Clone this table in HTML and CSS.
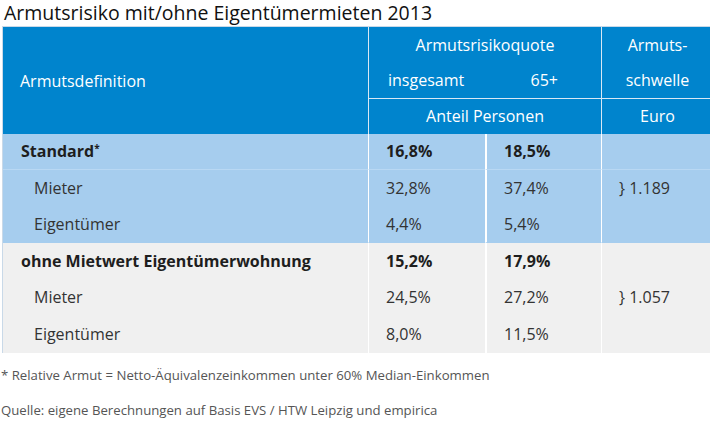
FILE: index.html
```html
<!DOCTYPE html>
<html lang="de">
<head>
<meta charset="utf-8">
<link rel="stylesheet" href="styles.css">
</head>
<body>
<h1 class="title">Armutsrisiko mit/ohne Eigentümermieten 2013</h1>
<table class="tbl">
  <colgroup>
    <col class="c1"><col class="c2"><col class="c3"><col class="c4">
  </colgroup>
  <thead>
    <tr>
      <th rowspan="2" class="def">Armutsdefinition</th>
      <th colspan="2" class="quote">
        <div class="qline">Armutsrisikoquote</div>
        <div class="qsub"><span>insgesamt</span><span>65+</span></div>
      </th>
      <th class="schw"><div class="qline">Armuts-</div><div class="qsub2">schwelle</div></th>
    </tr>
    <tr>
      <th colspan="2" class="unit">Anteil Personen</th>
      <th class="unit">Euro</th>
    </tr>
  </thead>
  <tbody class="blue">
    <tr class="head">
      <td class="lbl"><b>Standard<sup>*</sup></b></td>
      <td><b>16,8%</b></td><td class="mid"><b>18,5%</b></td><td></td>
    </tr>
    <tr>
      <td class="sub">Mieter</td>
      <td>32,8%</td><td class="mid">37,4%</td><td>} 1.189</td>
    </tr>
    <tr>
      <td class="sub">Eigentümer</td>
      <td>4,4%</td><td class="mid">5,4%</td><td></td>
    </tr>
  </tbody>
  <tbody class="gray">
    <tr class="head">
      <td class="lbl"><b>ohne Mietwert Eigentümerwohnung</b></td>
      <td><b>15,2%</b></td><td class="mid"><b>17,9%</b></td><td></td>
    </tr>
    <tr>
      <td class="sub">Mieter</td>
      <td>24,5%</td><td class="mid">27,2%</td><td>} 1.057</td>
    </tr>
    <tr>
      <td class="sub">Eigentümer</td>
      <td>8,0%</td><td class="mid">11,5%</td><td></td>
    </tr>
  </tbody>
</table>
<p class="note">* Relative Armut = Netto-Äquivalenzeinkommen unter 60% Median-Einkommen</p>
<p class="note">Quelle: eigene Berechnungen auf Basis EVS / HTW Leipzig und empirica</p>
</body>
</html>
```

FILE: styles.css
```css
html, body {
  margin: 0;
  padding: 0;
  background: #ffffff;
}
body {
  font-family: "Open Sans", "Liberation Sans", sans-serif;
  color: #333333;
  width: 710px;
  overflow: hidden;
}
.title {
  margin: 0;
  padding: 0 0 0 4px;
  font-size: 19.5px;
  font-weight: 400;
  line-height: 26px;
  height: 26px;
  color: #111111;
  white-space: nowrap;
}
.tbl {
  margin-left: 2px;
  width: 710px;
  border-collapse: separate;
  border-spacing: 0;
  table-layout: fixed;
  font-size: 16px;
  border-top: 1px solid #c9d9e8;
  border-left: 1px solid #c9d9e8;
}
.c1 { width: 365px; }
.c2 { width: 117px; }
.c3 { width: 116px; }
.c4 { width: 112px; }

thead th {
  background: #0084cd;
  color: #ffffff;
  font-weight: 400;
  padding: 0;
  border-left: 1px solid #d9e8f5;
  vertical-align: middle;
}
thead th.def {
  text-align: left;
  padding-left: 17px;
  border-left: none;
}
.qline {
  line-height: 36px;
  text-align: center;
}
.quote .qsub {
  display: flex;
  justify-content: space-between;
  line-height: 35px;
  padding: 0 43px 0 19px;
}
.qsub2 {
  line-height: 35px;
}
.quote, .schw {
  border-bottom: 1px solid #d9e8f5;
}
thead th.unit {
  height: 35px;
  line-height: 35px;
}

tbody td {
  padding: 0 0 0 17px;
  height: 36px;
  line-height: 36px;
  border-left: 1px solid #ffffff;
  white-space: nowrap;
}
tbody td.mid {
  border-left: 2px solid #ffffff;
}
tbody td.lbl {
  border-left: none;
  padding-left: 18px;
}
tbody td.sub {
  border-left: none;
  padding-left: 31px;
}
tbody b {
  color: #1e1e1e;
  font-weight: 700;
}
sup {
  font-size: 10px;
  line-height: 0;
  vertical-align: 5px;
}
.blue td {
  background: #a6cdee;
}
.blue tr.head td {
  height: 35px;
  line-height: 35px;
  border-bottom: 1px solid #b9d8f3;
}
.gray td {
  background: #f0f0f0;
  height: 37px;
  line-height: 37px;
}
.gray tr.head td {
  height: 36px;
  line-height: 36px;
  border-top: 1px solid #a6cdee;
}
.note {
  margin: 0;
  padding-left: 1px;
  font-size: 13.2px;
  line-height: 35px;
  color: #555555;
  white-space: nowrap;
}
.note:first-of-type {
  margin-top: 5px;
}
```
